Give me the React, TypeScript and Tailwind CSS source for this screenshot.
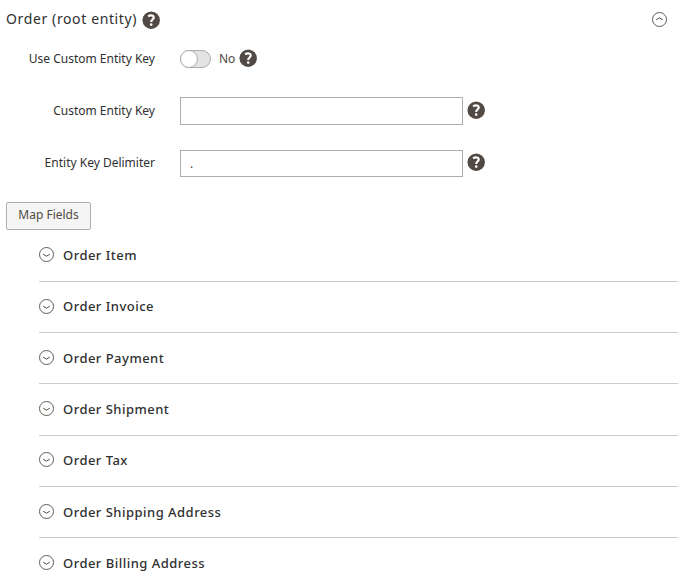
import type { ReactNode } from "react";

const sections = [
  "Order Item",
  "Order Invoice",
  "Order Payment",
  "Order Shipment",
  "Order Tax",
  "Order Shipping Address",
  "Order Billing Address",
];

function Help() {
  return (
    <svg className="-mt-[3px] h-[18px] w-[18px] shrink-0" viewBox="0 0 18 18" fill="none">
      <circle cx="9.2" cy="9.2" r="8.7" fill="#514943" />
      <path d="M6.1 5.4C8.3 3.9 11.7 4.1 11.7 6.5 11.7 8.6 9.2 8.5 9.2 11" stroke="#fff" strokeWidth="2.2" />
      <circle cx="9.2" cy="13.6" r="1.3" fill="#fff" />
    </svg>
  );
}

function Chevron({ up = false }: { up?: boolean }) {
  return (
    <svg
      className={up ? "h-[15px] w-[15px] shrink-0 rotate-180" : "-mt-[1.6px] h-[15px] w-[15px] shrink-0"}
      viewBox="0 0 15 15"
      fill="none"
      stroke="#514943"
    >
      <circle cx="7.5" cy="7.5" r="7" strokeWidth="0.9" />
      <path d="M4.2 7.2 7.5 9.2 10.8 7.2" strokeWidth="1" />
    </svg>
  );
}

function Row({ label, children }: { label: string; children: ReactNode }) {
  return (
    <div className="flex h-[52px] items-center">
      <label className="w-[155px] text-right text-[12px]">{label}</label>
      <div className="ml-[25px] flex items-center gap-1">{children}</div>
    </div>
  );
}

export default function App() {
  return (
    <div className="h-[586px] w-[685px] overflow-hidden bg-white font-['Noto_Sans',sans-serif] text-[#303030]">
      <div className="flex h-[33px] items-center pt-[7px] pr-[18px] pl-1.5">
        <h2 className="mr-[5px] -mt-[3px] text-[14px] tracking-[0.62px]">Order (root entity)</h2>
        <div className="mt-[3px]">
          <Help />
        </div>
        <div className="-mt-px ml-auto">
          <Chevron up />
        </div>
      </div>

      <Row label="Use Custom Entity Key">
        <span className="flex h-[18px] w-[31px] rounded-full border border-[#adadad] bg-[#e3e3e3]">
          <span className="-mt-px -ml-px h-[18px] w-[18px] rounded-full border border-[#adadad] bg-white" />
        </span>
        <span className="ml-[4px] text-[12px] text-[#514943]">No</span>
        <Help />
      </Row>
      <Row label="Custom Entity Key">
        <input className="h-7 w-[283px] border border-[#adadad] px-[9px] text-[12px] text-[#514943]" />
        <Help />
      </Row>
      <Row label="Entity Key Delimiter">
        <input className="mt-px h-[27px] w-[283px] border border-[#adadad] px-[9px] text-[12px] text-[#514943]" defaultValue="." />
        <Help />
      </Row>

      <button className="mt-[13px] ml-1.5 block h-7 w-[85px] rounded-[2px] border border-[#adadad] bg-[#f5f5f5] pb-0.5 text-[12px] text-[#514943]">
        Map Fields
      </button>

      <div className="mt-[0.4px] mr-[7px] ml-[39px]">
        {sections.map((name) => (
          <div key={name} className="flex h-[51.3px] items-center gap-[9px] border-b border-[#ccc]">
            <Chevron />
            <h3 className="mt-[0.6px] text-[13px] font-medium tracking-[0.48px]">{name}</h3>
          </div>
        ))}
      </div>
    </div>
  );
}
